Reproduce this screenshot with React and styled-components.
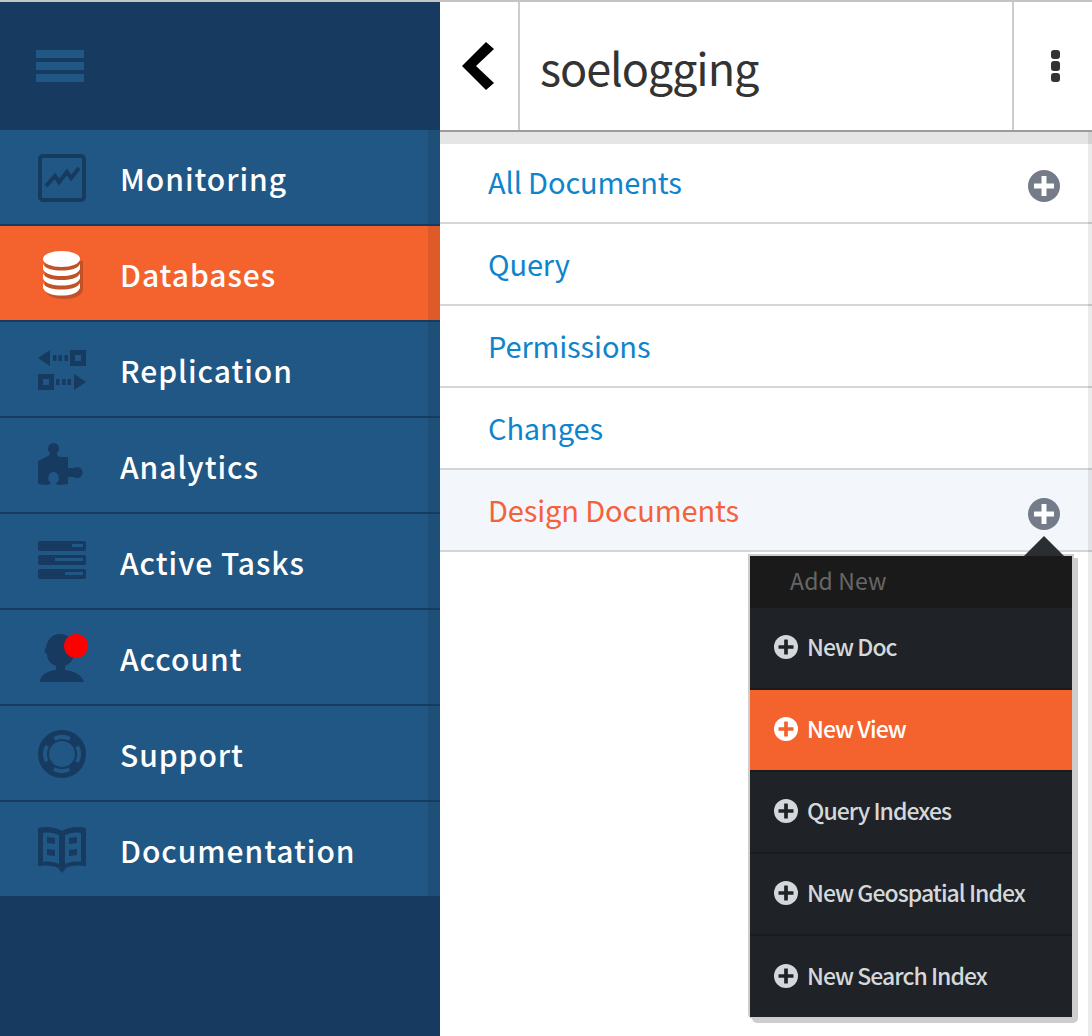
import React from "react";
import styled, { createGlobalStyle } from "styled-components";

const Global = createGlobalStyle`
  html, body { margin: 0; padding: 0; background: #fff; }
  body { font-family: "Noto Sans CJK SC", "Noto Sans", sans-serif; }
  * { box-sizing: border-box; }
`;

const DARK = "#163a60";
const ITEM = "#205784";
const ORANGE = "#f4632d";

const Page = styled.div`
  display: flex;
  width: 1092px;
  height: 1036px;
  border-top: 2px solid #c4c4c4;
  overflow: hidden;
`;
const Sidebar = styled.nav`
  width: 440px;
  flex: none;
  background: ${DARK};
  display: flex;
  flex-direction: column;
`;
const BrandBar = styled.div`
  height: 128px;
  padding: 48px 0 0 36px;
  flex: none;
`;
const BurgerLine = styled.div`
  width: 48px;
  height: 8px;
  margin-bottom: 4px;
  background: ${ITEM};
`;
const NavItem = styled.a`
  position: relative;
  display: flex;
  align-items: center;
  height: 96px;
  flex: none;
  padding: 0 0 0 38px;
  gap: 34px;
  background: ${(p) => (p.$active ? ORANGE : ITEM)};
  border-bottom: 2px solid ${DARK};
  color: #fff;
  font-size: 30px;
  font-weight: 500;
  letter-spacing: 0.95px;
  line-height: 1;
  &::after {
    content: "";
    position: absolute;
    top: 0;
    right: 0;
    bottom: 0;
    width: 12px;
    background: rgba(0, 0, 0, 0.09);
  }
  &:last-child {
    border-bottom: 0;
    height: 94px;
  }
`;
const NavIcon = styled.svg`
  width: 48px;
  height: 52px;
  flex: none;
  margin-top: 4px;
  fill: ${DARK};
  overflow: visible;
`;
const NavLabel = styled.span`
  position: relative;
  top: 1px;
`;
const Main = styled.main`
  position: relative;
  flex: 1;
  min-width: 0;
  display: flex;
  flex-direction: column;
`;
const EdgeStrip = styled.div`
  position: absolute;
  top: 130px;
  right: 0;
  bottom: 0;
  width: 4px;
  background: rgba(0, 0, 0, 0.08);
`;
const Header = styled.header`
  display: flex;
  height: 130px;
  flex: none;
  border-bottom: 2px solid #9c9c9c;
`;
const BackCell = styled.div`
  width: 80px;
  flex: none;
  display: flex;
  align-items: center;
  padding-left: 22px;
  border-right: 2px solid #cdcdcd;
`;
const Title = styled.h1`
  flex: 1;
  margin: 0;
  padding: 0 0 0 20px;
  display: flex;
  align-items: center;
  font-size: 45px;
  font-weight: 400;
  letter-spacing: -1.1px;
  color: #333;
`;
const MenuCell = styled.div`
  width: 80px;
  flex: none;
  display: flex;
  flex-direction: column;
  align-items: center;
  justify-content: center;
  gap: 2px;
  padding: 0 0 0 5px;
  border-left: 2px solid #cdcdcd;
`;
const KebabDot = styled.span`
  width: 9px;
  height: 9.500px;
  border-radius: 3px;
  background: #333;
`;
const Spacer = styled.div`
  height: 12px;
  flex: none;
  background: #e5e5e5;
`;
const Row = styled.a`
  display: flex;
  align-items: center;
  justify-content: space-between;
  height: ${(p) => (p.$first ? 80 : 82)}px;
  flex: none;
  padding: 0 32px ${(p) => (p.$first ? 2 : 0)}px 48px;
  border-bottom: 2px solid #d3d6d9;
  background: ${(p) => (p.$active ? "#f3f6fa" : "#fff")};
  color: ${(p) => (p.$active ? "#f3623a" : "#0d84cc")};
  font-size: 29px;
  font-weight: 400;
  letter-spacing: -0.12px;
  line-height: 1;
`;
const RowLabel = styled.span`
  position: relative;
  top: -1px;
`;
const PlusBadge = styled.svg`
  width: ${(p) => p.$size}px;
  height: ${(p) => p.$size}px;
  margin-top: ${(p) => p.$drop || 0}px;
  flex: none;
`;
const Popup = styled.div`
  position: absolute;
  top: 554px;
  left: 310px;
  width: 322px;
  background: #1f2327;
  border-radius: 0 0 3px 3px;
  box-shadow: 0 0 0 2px #cdcdcd, 4px 4px 0 2px #cdcdcd;
  &::before {
    content: "";
    position: absolute;
    top: -20px;
    right: 8px;
    border-style: solid;
    border-width: 0 20px 20px;
    border-color: transparent transparent #2a2e33;
  }
`;
const PopupTitle = styled.div`
  height: 52px;
  padding: 2px 0 0 40px;
  background: #1a1a1a;
  color: #666;
  font-size: 23px;
  letter-spacing: 0.15px;
  line-height: 44px;
`;
const PopupItem = styled.a`
  display: flex;
  align-items: center;
  gap: 9px;
  height: ${(p) => (p.$last ? 81 : 82)}px;
  padding: 0 0 ${(p) => (p.$last ? 1 : 2)}px 24px;
  background: ${(p) => (p.$active ? ORANGE : "#1f2327")};
  border-bottom: ${(p) => (p.$last ? "0" : "2px solid #191b1d")};
  color: ${(p) => (p.$active ? "#fff" : "#d5d8db")};
  font-size: 23px;
  font-weight: 500;
  letter-spacing: -0.96px;
  line-height: 1;
`;
const ItemText = styled.span`
  position: relative;
  top: -1px;
`;

const Plus = ({ size, bg, fg, arm, drop }) => {
  const c = size / 2;
  const w = size * 0.155;
  const l = arm * 2;
  return (
    <PlusBadge $size={size} $drop={drop} viewBox={`0 0 ${size} ${size}`}>
      <circle cx={c} cy={c} r={c} fill={bg} />
      <rect x={c - l / 2} y={c - w / 2} width={l} height={w} rx="0.5" fill={fg} />
      <rect x={c - w / 2} y={c - l / 2} width={w} height={l} rx="0.5" fill={fg} />
    </PlusBadge>
  );
};

const icons = {
  monitoring: (
    <>
      <rect x="2" y="3" width="44" height="44" rx="3" fill="none" stroke={DARK} strokeWidth="4" />
      <path d="M8 33 L17 23 L21 29 L29 19 L33 25 L41 15" fill="none" stroke={DARK} strokeWidth="4" />
    </>
  ),
  db: (
    <>
      <path d="M7 12 V40 C7 47 18 50 26 50 C35 50 45 47 45 40 V12 Z" fill="#c0522a" />
      <ellipse cx="23.500" cy="10" rx="18.500" ry="8" fill="#fff" />
      <path d="M5 15 C7.500 20 15.500 21.500 23.500 21.500 C31.500 21.500 39.500 20 42 15 V20 C39.500 25.500 31.500 27 23.500 27 C15.500 27 7.500 25.500 5 20 Z" fill="#fff" />
      <path d="M5 24.500 C7.500 29.500 15.500 31 23.500 31 C31.500 31 39.500 29.500 42 24.500 V29.500 C39.500 35 31.500 36.500 23.500 36.500 C15.500 36.500 7.500 35 5 29.500 Z" fill="#fff" />
      <path d="M5 34 C7.500 39 15.500 40.500 23.500 40.500 C31.500 40.500 39.500 39 42 34 V39 C39.500 45 31.500 46.500 23.500 46.500 C15.500 46.500 7.500 45 5 39 Z" fill="#fff" />
    </>
  ),
  replication: (
    <g transform="translate(0 3)">
      <path d="M0 10 L12 2 V18 Z" />
      <path d="M15 7 h3.500 v6 h-3.500 z M20.500 7 h3.500 v6 h-3.500 z M26.500 7 h3.500 v6 h-3.500 z" />
      <path fillRule="evenodd" d="M32 2 h16 v16 h-16 z M37 7 v6 h6 v-6 z" />
      <path fillRule="evenodd" d="M0 26 h16 v16 h-16 z M5 31 v6 h6 v-6 z" />
      <path d="M18 31 h3.500 v6 h-3.500 z M24 31 h3.500 v6 h-3.500 z M29.500 31 h3.500 v6 h-3.500 z" />
      <path d="M48 34 L36 26 V42 Z" />
    </g>
  ),
  puzzle: (
    <>
      <circle cx="15.500" cy="7.500" r="5.500" />
      <path d="M12 11 h7 C18.500 13 19 15 22 16 H30 V27 H35 V36 H30 V43 L22 44 C20 44 18 43 18 42 C20 41 21 39 21 37 H10 C10 39 11 41 13 42 C12 43 10 44 8 44 L0 43 V20 L8 16 C11 15 12.500 13 12 11 Z" />
      <circle cx="39" cy="31.500" r="5.500" />
      <circle cx="15.500" cy="36" r="5" fill={ITEM} />
    </>
  ),
  tasks: (
    <g transform="translate(0 2)">
      <rect x="0" y="2" width="48" height="10" rx="2" />
      <rect x="0" y="16" width="48" height="10" rx="2" />
      <rect x="0" y="30" width="48" height="10" rx="2" />
      <rect x="34" y="5" width="11" height="3" fill={ITEM} />
      <rect x="17" y="19" width="28" height="3" fill={ITEM} />
      <rect x="27" y="33" width="18" height="3" fill={ITEM} />
    </g>
  ),
  account: (
    <path d="M2 49 C2 42 9 38 18 37 V33 C12 31 9 26 9 21 C6.500 20 6 16 8 15 C9 7 14 1 22 1 C32 1 38 9 37 18 C36 25 33 31 27 33 V37 C36 38 44 42 46 49 Z" />
  ),
  support: (
    <>
      <circle cx="24" cy="25" r="18.500" fill="none" stroke={DARK} strokeWidth="11" />
      <circle
        cx="24"
        cy="25"
        r="17"
        fill="none"
        stroke={ITEM}
        strokeWidth="4"
        strokeDasharray="16 10.700"
        transform="rotate(-117 24 25)"
      />
    </>
  ),
  book: (
    <>
      <path fillRule="evenodd" d="M0 3 C8 1 18 2 24 6 C30 2 40 1 48 3 V41 H46 C38 40 31 41 28 43 L24 48 L20 43 C17 41 10 40 2 41 H0 Z M5 8 V37 C11 36 16 37 21 39 V10 C16 8 11 7 5 8 Z M43 8 C37 7 32 8 27 10 V39 C32 37 37 36 43 37 Z" />
      <path d="M9 12 L17 13 V19 L9 18 Z M9 24 L17 25 V31 L9 30 Z M39 12 L31 13 V19 L39 18 Z M39 24 L31 25 V31 L39 30 Z" />
    </>
  ),
};

const navItems = [
  ["Monitoring", "monitoring"],
  ["Databases", "db", true],
  ["Replication", "replication"],
  ["Analytics", "puzzle"],
  ["Active Tasks", "tasks"],
  ["Account", "account"],
  ["Support", "support"],
  ["Documentation", "book"],
];

const RedDot = styled.span`
  position: absolute;
  left: 64px;
  top: 24px;
  width: 24px;
  height: 24px;
  border-radius: 50%;
  background: #fe0000;
`;

const rows = [["Query"], ["Permissions"], ["Changes"]];

const popupItems = ["New Doc", "New View", "Query Indexes", "New Geospatial Index", "New Search Index"];

export default function App() {
  return (
    <>
      <Global />
      <Page>
        <Sidebar>
          <BrandBar>
            <BurgerLine />
            <BurgerLine />
            <BurgerLine />
          </BrandBar>
          {navItems.map(([label, icon, active]) => (
            <NavItem key={label} $active={active}>
              <NavIcon viewBox="0 0 48 52">{icons[icon]}</NavIcon>
              <NavLabel>{label}</NavLabel>
              {icon === "account" && <RedDot />}
            </NavItem>
          ))}
        </Sidebar>
        <Main>
          <Header>
            <BackCell>
              <svg width="34" height="48" viewBox="0 0 34 48">
                <path d="M24 0 L32 7 L14 24 L32 41 L24 48 L0 24 Z" fill="#000" />
              </svg>
            </BackCell>
            <Title>soelogging</Title>
            <MenuCell>
              <KebabDot />
              <KebabDot />
              <KebabDot />
            </MenuCell>
          </Header>
          <Spacer />
          <Row $first>
            <RowLabel>All Documents</RowLabel>
            <Plus size={32} bg="#747c8a" fg="#fff" arm={10} drop={8} />
          </Row>
          {rows.map(([label]) => (
            <Row key={label}>
              <RowLabel>{label}</RowLabel>
            </Row>
          ))}
          <Row $active>
            <RowLabel>Design Documents</RowLabel>
            <Plus size={32} bg="#747c8a" fg="#fff" arm={10} drop={8} />
          </Row>
          <EdgeStrip />
          <Popup>
            <PopupTitle>Add New</PopupTitle>
            {popupItems.map((label, i) => (
              <PopupItem key={label} $active={i === 1} $last={i === 4}>
                <Plus
                  size={24}
                  bg={i === 1 ? "#fff" : "#d5d8db"}
                  fg={i === 1 ? ORANGE : "#1f2327"}
                  arm={7.5}
                />
                <ItemText>{label}</ItemText>
              </PopupItem>
            ))}
          </Popup>
        </Main>
      </Page>
    </>
  );
}
